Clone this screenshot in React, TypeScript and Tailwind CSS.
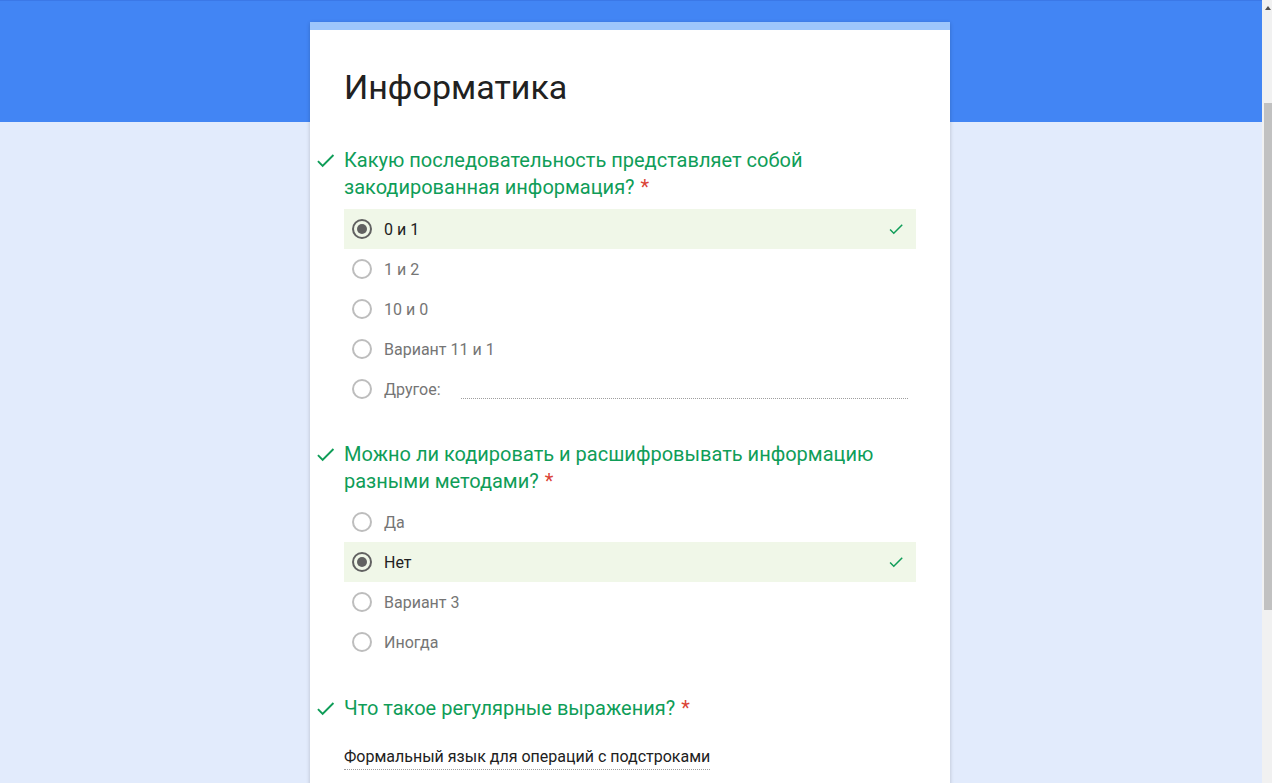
import React from "react";

const GREEN = "#0f9d58";

function Check({ size, className }: { size: number; className?: string }) {
  return (
    <svg width={size} height={size} viewBox="0 0 24 24" className={className}>
      <path d="M9 16.17L4.83 12l-1.42 1.41L9 19 21 7l-1.41-1.41z" fill={GREEN} />
    </svg>
  );
}

function Radio({ selected }: { selected?: boolean }) {
  return selected ? (
    <div className="w-[20px] h-[20px] rounded-full border-2 border-[#616161] flex items-center justify-center shrink-0">
      <div className="w-[10px] h-[10px] rounded-full bg-[#616161]" />
    </div>
  ) : (
    <div className="w-[20px] h-[20px] rounded-full border-2 border-[#bdbdbd] shrink-0" />
  );
}

function Option({ label, selected, correct, other }: { label: string; selected?: boolean; correct?: boolean; other?: boolean }) {
  return (
    <div className={"h-[40px] flex items-center pl-[8px] pr-[11px] " + (correct ? "bg-[#f0f7e8]" : "")}>
      <Radio selected={selected} />
      <span className={"ml-[12px] mt-[2px] text-[16px] " + (selected ? "text-[#212121]" : "text-[#757575]")}>{label}</span>
      {other && <div className="ml-[20px] flex-1 mr-[-3px] mt-[18px] border-b border-dotted border-[#9e9e9e]" />}
      {correct && (
        <div className="ml-auto flex items-center">
          <Check size={18} />
        </div>
      )}
    </div>
  );
}

function Question({ lines }: { lines: string[] }) {
  return (
    <div className="flex -ml-[30px]">
      <div className="w-[30px] h-[27px] flex items-center">
        <Check size={23} />
      </div>
      <div className="text-[20px] leading-[27px] text-[#0f9d58]">
        {lines.map((l, i) => (
          <div key={i}>
            {l}
            {i === lines.length - 1 && <span className="text-[#db4437] ml-[6px]">*</span>}
          </div>
        ))}
      </div>
    </div>
  );
}

export default function App() {
  return (
    <div className="flex h-[783px] overflow-hidden" style={{ fontFamily: "Roboto, 'Noto Sans', sans-serif" }}>
      <div className="flex-1 pr-[2px] border-t border-[#3b78e7] bg-[linear-gradient(#4285f4_0px,#4285f4_121px,#e2ebfc_121px)]">
        <div className="mx-auto w-[640px] mt-[21px] bg-white border-t-[8px] border-[#9dc6fb] shadow-[0_1px_4px_rgba(0,0,0,0.2)] px-[34px] pt-[35px] pb-[40px]">
          <h1 className="text-[34px] leading-[44px] text-[#212121]">Информатика</h1>

          <div className="mt-[38px]">
            <Question lines={["Какую последовательность представляет собой", "закодированная информация?"]} />
            <div className="mt-[8px]">
              <Option label="0 и 1" selected correct />
              <Option label="1 и 2" />
              <Option label="10 и 0" />
              <Option label="Вариант 11 и 1" />
              <Option label="Другое:" other />
            </div>
          </div>

          <div className="mt-[32px]">
            <Question lines={["Можно ли кодировать и расшифровывать информацию", "разными методами?"]} />
            <div className="mt-[7px]">
              <Option label="Да" />
              <Option label="Нет" selected correct />
              <Option label="Вариант 3" />
              <Option label="Иногда" />
            </div>
          </div>

          <div className="mt-[33px]">
            <Question lines={["Что такое регулярные выражения?"]} />
            <div className="mt-[24px] inline-block border-b border-dotted border-[#9e9e9e] pb-[1px] text-[16px] leading-[22px] text-[#212121]">
              Формальный язык для операций с подстроками
            </div>
          </div>
        </div>
      </div>
      <div className="w-[10px] bg-[#f1f1f1] flex flex-col">
        <div className="h-[16px] flex items-center justify-center pl-[2px]">
          <svg width="6" height="4" viewBox="0 0 6 4">
            <path d="M0 4 L3 0 L6 4 Z" fill="#505050" />
          </svg>
        </div>
        <div className="mt-[87px] ml-[2px] h-[507px] bg-[#c1c1c1]" />
      </div>
    </div>
  );
}
